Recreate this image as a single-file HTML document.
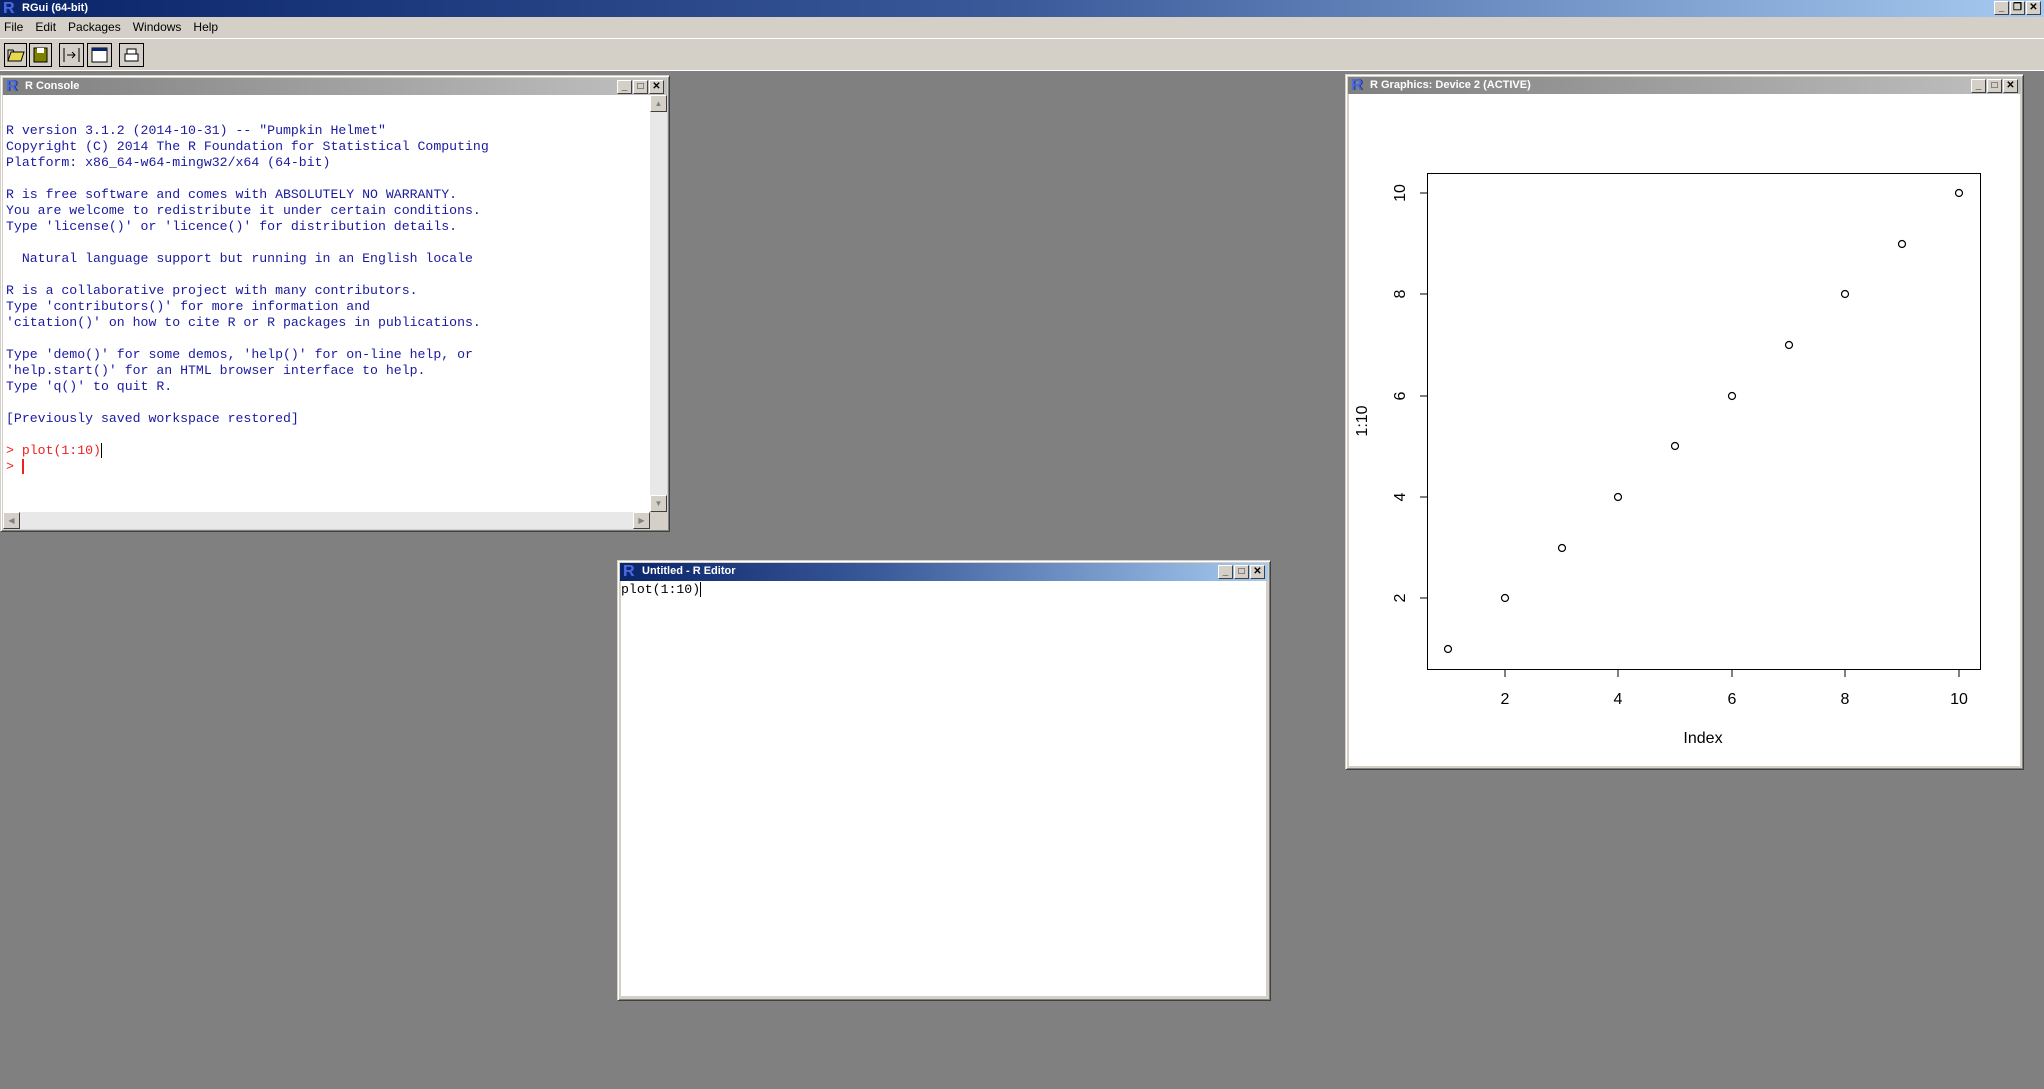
<!DOCTYPE html>
<html><head><meta charset="utf-8"><style>
*{margin:0;padding:0;box-sizing:border-box}
body{width:2044px;height:1089px;background:#808080;position:relative;overflow:hidden;font-family:"Liberation Sans",sans-serif}
.abs{position:absolute}
.tb{font-weight:bold;font-size:11px;color:#fff;line-height:17px;padding-left:22px;white-space:nowrap}
.ricon{position:absolute;left:3px;top:0;font:bold 16px/17px "Liberation Sans",sans-serif;color:#4a6ae0;text-shadow:1px 0 #1a2a80}
.btns{position:absolute;right:3px;top:2px;display:flex;gap:1px}
.btns div{width:15px;height:14px;background:#d4d0c8;border:1px solid;border-color:#fff #404040 #404040 #fff;font:bold 10px/12px "Liberation Sans",sans-serif;color:#000;text-align:center}
.win{position:absolute;background:#d4d0c8;border:1px solid;border-color:#d4d0c8 #404040 #404040 #d4d0c8;box-shadow:inset 1px 1px #fff,inset -1px -1px #808080}
.con{font:13.2px/16px "Liberation Mono",monospace;color:#1a1aa0;white-space:pre;position:absolute;left:6px;top:123px}
</style></head><body>
<div class="abs tb" style="left:0;top:0;width:2044px;height:17px;background:linear-gradient(90deg,#0a246a,#3a5a9a 50%,#a6caf0)"><span class="ricon">R</span>RGui (64-bit)
<div class="btns" style="top:1px"><div>_</div><div>❐</div><div>✕</div></div></div>
<div class="abs" style="left:0;top:17px;width:2044px;height:21px;background:#d4d0c8;font-size:12px;line-height:21px;white-space:nowrap">
<span style="margin-left:4px">File</span><span style="margin-left:12px">Edit</span><span style="margin-left:12px">Packages</span><span style="margin-left:12px">Windows</span><span style="margin-left:12px">Help</span></div>
<div class="abs" style="left:0;top:38px;width:2044px;height:34px;background:#d4d0c8;border-top:1px solid #fff;border-bottom:2px solid #808080"></div>
<div class="abs" style="left:0;top:70px;width:2044px;height:1px;background:#fff"></div>
<svg class="abs" style="left:0;top:40px" width="160" height="30">
<g fill="#d4d0c8" stroke="#000"><rect x="4.5" y="3.5" width="22" height="23"/><rect x="29.5" y="3.5" width="22" height="23"/><rect x="59.5" y="3.5" width="24" height="23"/><rect x="87.5" y="3.5" width="24" height="23"/><rect x="119.5" y="3.5" width="24" height="23"/></g>
<path d="M8 21 L11 12 H24 L21 21Z" fill="#e8d850" stroke="#000"/><path d="M8 21 V10 H13 L14 12" fill="none" stroke="#000"/>
<rect x="34" y="8" width="13" height="14" fill="#808000" stroke="#000"/><rect x="37" y="8" width="7" height="5" fill="#fff"/>
<path d="M64 8 V22 M79 8 V22 M67 15 H75 M72 12 L75 15 L72 18" stroke="#000" fill="none"/>
<rect x="92" y="8" width="15" height="14" fill="#fff" stroke="#000"/><rect x="92" y="8" width="15" height="3" fill="#0a246a"/>
<path d="M125 14 H138 V21 H125Z M127 14 V9 H136 V14" fill="#fff" stroke="#000"/>
</svg>

<div class="win" style="left:0;top:75px;width:670px;height:457px">
<div class="abs tb" style="left:2px;top:2px;right:2px;height:17px;background:linear-gradient(90deg,#808080,#c0c0c0)"><span class="ricon">R</span>R Console<div class="btns"><div>_</div><div>□</div><div>✕</div></div></div>
<div class="abs" style="left:2px;top:19px;width:647px;height:417px;background:#fff"></div>
<div class="abs" style="left:649px;top:19px;width:17px;height:417px;background:#e8e8e8"></div>
<div class="abs" style="left:649px;top:19px;width:17px;height:17px;background:#d4d0c8;border:1px solid;border-color:#fff #404040 #404040 #fff;font-size:8px;text-align:center;line-height:15px;color:#808080">▲</div>
<div class="abs" style="left:649px;top:419px;width:17px;height:17px;background:#d4d0c8;border:1px solid;border-color:#fff #404040 #404040 #fff;font-size:8px;text-align:center;line-height:15px;color:#808080">▼</div>
<div class="abs" style="left:2px;top:436px;width:647px;height:17px;background:#e8e8e8"></div>
<div class="abs" style="left:2px;top:436px;width:17px;height:17px;background:#d4d0c8;border:1px solid;border-color:#fff #404040 #404040 #fff;font-size:8px;text-align:center;line-height:15px;color:#808080">◀</div>
<div class="abs" style="left:632px;top:436px;width:17px;height:17px;background:#d4d0c8;border:1px solid;border-color:#fff #404040 #404040 #fff;font-size:8px;text-align:center;line-height:15px;color:#808080">▶</div>
<div class="abs" style="left:649px;top:436px;width:17px;height:17px;background:#d4d0c8"></div>
</div>
<div class="con">R version 3.1.2 (2014-10-31) -- "Pumpkin Helmet"
Copyright (C) 2014 The R Foundation for Statistical Computing
Platform: x86_64-w64-mingw32/x64 (64-bit)

R is free software and comes with ABSOLUTELY NO WARRANTY.
You are welcome to redistribute it under certain conditions.
Type 'license()' or 'licence()' for distribution details.

  Natural language support but running in an English locale

R is a collaborative project with many contributors.
Type 'contributors()' for more information and
'citation()' on how to cite R or R packages in publications.

Type 'demo()' for some demos, 'help()' for on-line help, or
'help.start()' for an HTML browser interface to help.
Type 'q()' to quit R.

[Previously saved workspace restored]

<span style="color:#f02020">&gt; plot(1:10)</span><span style="border-left:1px solid #000"></span>
<span style="color:#f02020">&gt; <span style="border-left:2px solid #f02020"></span></span></div>

<div class="win" style="left:1345px;top:74px;width:679px;height:696px">
<div class="abs tb" style="left:2px;top:2px;right:2px;height:17px;background:linear-gradient(90deg,#808080,#c0c0c0)"><span class="ricon">R</span>R Graphics: Device 2 (ACTIVE)<div class="btns"><div>_</div><div>□</div><div>✕</div></div></div>
<div class="abs" style="left:3px;top:19px;width:671px;height:672px;background:#fff"></div>
</div>
<svg class="abs" style="left:0;top:0" width="2044" height="1089" font-family="Liberation Sans" font-size="16">
<rect x="1427.5" y="173.5" width="553" height="496" fill="none" stroke="#000"/>
<g stroke="#000"><path d="M1505 670V677M1618 670V677M1732 670V677M1845 670V677M1959 670V677"/>
<path d="M1427 598H1420M1427 497H1420M1427 396H1420M1427 294H1420M1427 193H1420"/></g>
<g text-anchor="middle"><text x="1505" y="704">2</text><text x="1618" y="704">4</text><text x="1732" y="704">6</text><text x="1845" y="704">8</text><text x="1959" y="704">10</text>
<text x="1703" y="743">Index</text>
<g transform="translate(1405,0)"><text transform="translate(0,598) rotate(-90)">2</text><text transform="translate(0,497) rotate(-90)">4</text><text transform="translate(0,396) rotate(-90)">6</text><text transform="translate(0,294) rotate(-90)">8</text><text transform="translate(0,193) rotate(-90)">10</text></g>
<text transform="translate(1367,421) rotate(-90)">1:10</text></g>
<g fill="none" stroke="#000" stroke-width="1.2">
<circle cx="1448" cy="649" r="3.5"/><circle cx="1505" cy="598" r="3.5"/><circle cx="1562" cy="548" r="3.5"/><circle cx="1618" cy="497" r="3.5"/><circle cx="1675" cy="446" r="3.5"/><circle cx="1732" cy="396" r="3.5"/><circle cx="1789" cy="345" r="3.5"/><circle cx="1845" cy="294" r="3.5"/><circle cx="1902" cy="244" r="3.5"/><circle cx="1959" cy="193" r="3.5"/></g>
</svg>

<div class="win" style="left:617px;top:560px;width:654px;height:441px">
<div class="abs tb" style="left:2px;top:2px;right:2px;height:18px;background:linear-gradient(90deg,#0a246a,#3a5a9a 40%,#a6caf0)"><span class="ricon">R</span>Untitled - R Editor<div class="btns"><div>_</div><div>□</div><div>✕</div></div></div>
<div class="abs" style="left:3px;top:20px;width:645px;height:415px;background:#fff;font:13.2px/18px 'Liberation Mono',monospace;color:#000">plot(1:10)<span style="border-left:1px solid #000"></span></div>
</div>
</body></html>
